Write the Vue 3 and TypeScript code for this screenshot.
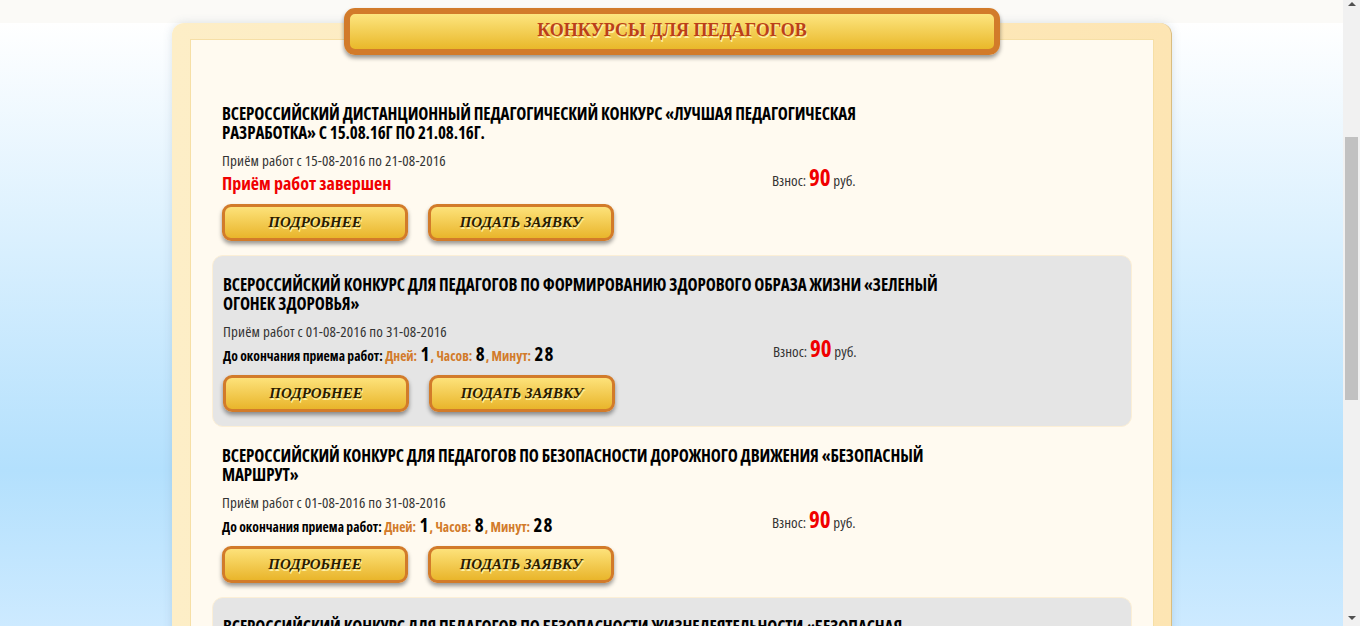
<script setup lang="ts">
interface Contest {
  title: string[]
  period: string
  closed: boolean
}

const contests: Contest[] = [
  {
    title: ['Всероссийский дистанционный педагогический конкурс «Лучшая педагогическая', 'разработка» с 15.08.16г по 21.08.16г.'],
    period: 'Приём работ с 15-08-2016 по 21-08-2016',
    closed: true
  },
  {
    title: ['Всероссийский конкурс для педагогов по формированию здорового образа жизни «Зеленый', 'огонек здоровья»'],
    period: 'Приём работ с 01-08-2016 по 31-08-2016',
    closed: false
  },
  {
    title: ['Всероссийский конкурс для педагогов по безопасности дорожного движения «Безопасный', 'маршрут»'],
    period: 'Приём работ с 01-08-2016 по 31-08-2016',
    closed: false
  },
  {
    title: ['Всероссийский конкурс для педагогов по безопасности жизнедеятельности «Безопасная', 'жизнь»'],
    period: 'Приём работ с 01-08-2016 по 31-08-2016',
    closed: false
  }
]
</script>

<template>
  <div class="screen">
    <main class="page">
      <section class="panel">
        <h1 class="panel-title">конкурсы для педагогов</h1>
        <div class="panel-inner">
          <article v-for="(item, i) in contests" :key="i" class="contest" :class="{ 'contest--grey': i % 2 === 1 }">
            <h2 class="contest-title">
              <template v-for="line in item.title" :key="line">{{ line }}<br></template>
            </h2>
            <div class="contest-info">
              <div class="contest-dates">
                <div class="period">{{ item.period }}</div>
                <div v-if="item.closed" class="closed">Приём работ завершен</div>
                <div v-else class="timer">
                  До окончания приема работ:
                  <span class="unit">Дней:</span> <span class="num">1</span><span class="unit">,</span>{{ ' ' }}
                  <span class="unit">Часов:</span> <span class="num">8</span><span class="unit">,</span>{{ ' ' }}
                  <span class="unit">Минут:</span> <span class="num">28</span>
                </div>
              </div>
              <div class="fee">Взнос: <b>90</b> руб.</div>
            </div>
            <div class="contest-actions">
              <button class="btn">подробнее</button>
              <button class="btn">подать заявку</button>
            </div>
          </article>
        </div>
      </section>
    </main>
    <aside class="scrollbar">
      <span class="arrow arrow--up"></span>
      <div class="track"><div class="thumb"></div></div>
      <span class="arrow arrow--down"></span>
    </aside>
  </div>
</template>

<style scoped>
.screen {
  display: flex;
  height: 626px;
  overflow: hidden;
  font-family: "Open Sans", sans-serif;
  font-stretch: 75%;
  color: #000;
}

.page {
  flex: 1;
  min-width: 0;
  padding-top: 23px;
  background:
    linear-gradient(#fbfaf7 0 23px, transparent 23px),
    linear-gradient(#fff 23px, #b3e0fd 470px, #cdeaff 626px);
}

.panel {
  position: relative;
  box-sizing: border-box;
  width: 1000px;
  margin-left: 172px;
  padding: 16px 17px 0 18px;
  border-radius: 12px 12px 0 0;
  background: linear-gradient(90deg, #fdeec7, #fde5b3);
  border-right: 1px solid #d9bd80;
  box-shadow: 0 0 10px rgba(90, 120, 150, .2);
}

.panel-title {
  position: absolute;
  top: -15px;
  left: 172px;
  box-sizing: border-box;
  width: 656px;
  height: 47px;
  margin: 0;
  border: 6px solid #d27b2a;
  border-radius: 11px;
  background: linear-gradient(#fde57f, #e9b82a);
  box-shadow: 0 3px 4px rgba(0, 0, 0, .4);
  text-align: center;
  text-transform: uppercase;
  font: 700 18px/33px "Liberation Serif", serif;
  color: #bb3f1a;
  text-shadow: 1px 2px 0 #fdf0a6;
}

.panel-inner {
  box-sizing: border-box;
  height: 603px;
  padding: 44px 21px 0;
  border: 1px solid #f6dfa6;
  border-bottom: 0;
  background: #fffaf0;
}

.contest {
  box-sizing: border-box;
  height: 171px;
  padding: 20px 10px 0;
}

.contest--grey {
  height: 172px;
  margin-bottom: -1px;
  padding: 19px 10px 0;
  border: 1px solid #fcefd6;
  border-radius: 11px;
  background: #e5e5e5;
}

.contest-title {
  margin: 0;
  font-size: 17px;
  line-height: 19px;
  font-weight: 700;
  letter-spacing: -.1px;
  text-transform: uppercase;
}

.contest-info {
  display: flex;
  margin-top: 7px;
}

.contest-dates {
  width: 550px;
  height: 50px;
}

.period {
  margin-top: 1px;
  font-size: 15px;
  line-height: 20px;
  letter-spacing: .15px;
  color: #333;
}

.closed {
  margin-top: 2px;
  font-size: 18px;
  line-height: 22px;
  font-weight: 700;
  color: #f00000;
}

.timer {
  margin-top: 2px;
  font-size: 13.6px;
  line-height: 22px;
  font-weight: 700;
}

.unit {
  color: #d27b2a;
}

.num {
  margin-left: 1px;
  font-size: 19px;
  letter-spacing: 1px;
}

.fee {
  padding-top: 15px;
  font-size: 15px;
  line-height: 26px;
  color: #333;
}

.fee b {
  font-size: 23px;
  color: #f00000;
}

.contest-actions {
  display: flex;
  gap: 20px;
  margin-top: 5px;
}

.btn {
  box-sizing: border-box;
  width: 186px;
  height: 37px;
  padding: 0;
  border: 3px solid #d27b2a;
  border-radius: 9px;
  background: linear-gradient(#fde27a, #e9b52b);
  box-shadow: 0 3px 4px rgba(0, 0, 0, .4);
  font: italic 700 15px/1 "Liberation Serif", serif;
  text-transform: uppercase;
  color: #2a1c00;
  text-shadow: 1px 2px 0 #fdf0a6;
}

.scrollbar {
  display: flex;
  flex-direction: column;
  align-items: center;
  flex: none;
  width: 17px;
  background: #f1f1f1;
}

.arrow {
  flex: none;
  width: 0;
  height: 0;
  margin: 2px 0;
  border-left: 4px solid transparent;
  border-right: 4px solid transparent;
}

.arrow--up {
  margin-top: 2px;
  border-bottom: 4px solid #505050;
}

.arrow--down {
  margin-bottom: 6px;
  border-top: 4px solid #505050;
}

.track {
  flex: 1;
  align-self: stretch;
  padding: 129px 2px 0;
}

.thumb {
  height: 263px;
  background: #c1c1c1;
}
</style>
